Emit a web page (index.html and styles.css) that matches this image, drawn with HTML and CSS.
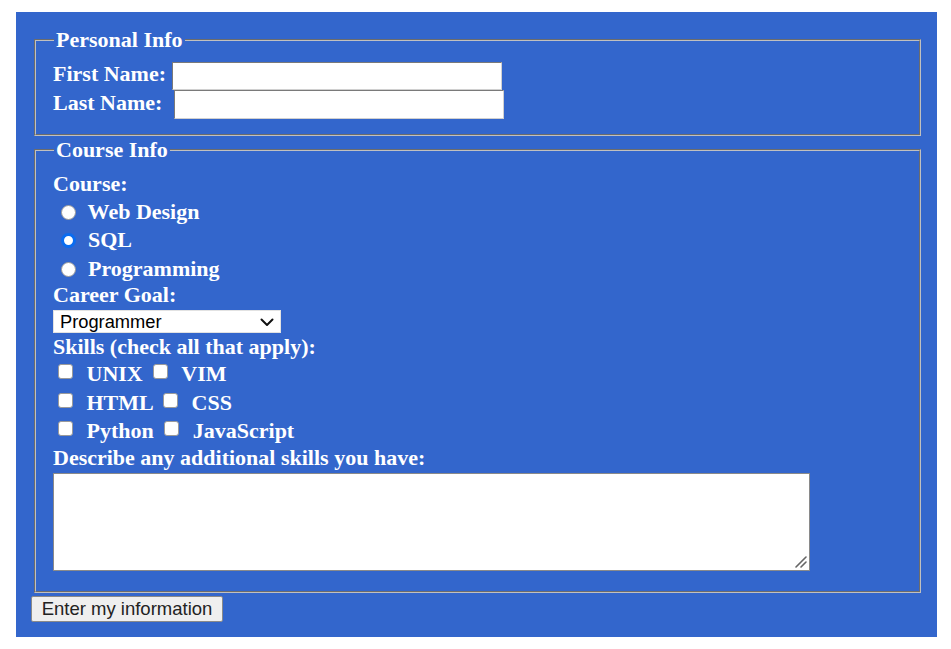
FILE: index.html
```html
<!DOCTYPE html>
<html>
<head>
<meta charset="utf-8">
<title>Course Form</title>
<link rel="stylesheet" href="styles.css">
</head>
<body>
<form class="form">
  <fieldset class="group group-personal">
    <legend class="legend">Personal Info</legend>
    <div class="field-row">
      <label class="label" for="fname">First Name:</label>
      <input class="text-input text-input-first" type="text" id="fname">
    </div>
    <div class="field-row">
      <label class="label" for="lname">Last Name:</label>
      <input class="text-input text-input-last" type="text" id="lname">
    </div>
  </fieldset>
  <fieldset class="group group-course">
    <legend class="legend">Course Info</legend>
    <div class="line line-course">Course:</div>
    <div class="line line-option"><input class="radio" type="radio" name="course"> Web Design</div>
    <div class="line line-option"><input class="radio" type="radio" name="course" checked> SQL</div>
    <div class="line line-option"><input class="radio" type="radio" name="course"> Programming</div>
    <div class="line line-career">Career Goal:</div>
    <div class="select-wrap">
      <select class="select">
        <option>Programmer</option>
        <option>Designer</option>
        <option>Database Admin</option>
      </select>
      <svg class="select-arrow" width="14" height="9" viewBox="0 0 14 9" aria-hidden="true">
        <path d="M1.5 1.5 L7 7 L12.5 1.5" fill="none" stroke="#111" stroke-width="2" stroke-linecap="round" stroke-linejoin="round"/>
      </svg>
    </div>
    <div class="line line-skills">Skills (check all that apply):</div>
    <div class="line line-option"><input class="check" type="checkbox"> UNIX <input class="check" type="checkbox"> VIM</div>
    <div class="line line-option"><input class="check" type="checkbox"> HTML <input class="check" type="checkbox"> CSS</div>
    <div class="line line-option"><input class="check" type="checkbox"> Python <input class="check" type="checkbox"> JavaScript</div>
    <div class="line line-describe">Describe any additional skills you have:</div>
    <div class="textarea-wrap">
      <textarea class="textarea"></textarea>
      <svg class="grip" width="12" height="12" viewBox="0 0 12 12" aria-hidden="true">
        <path d="M1 11 L11 1 M6 11 L11 6" fill="none" stroke="#666" stroke-width="1.6" stroke-linecap="round"/>
      </svg>
    </div>
  </fieldset>
  <button class="submit" type="button">Enter my information</button>
</form>
</body>
</html>
```
FILE: styles.css
```css
html, body {
  margin: 0;
  padding: 0;
  background: #ffffff;
}

.form {
  box-sizing: border-box;
  width: 921px;
  margin: 12px 0 0 16px;
  padding: 15px 0 15px 0;
  background: #3366cc;
  color: #ffffff;
  font-family: "Liberation Serif", "Times New Roman", serif;
  font-weight: bold;
  font-size: 22px;
}

.group {
  margin: 0 16px 0 18px;
  border: 2px groove #c0c0c0;
  padding: 8px 17px 15px 17px;
  min-width: 0;
}

.group-course {
  margin-top: 1px;
  padding-top: 7px;
  padding-bottom: 20px;
}

.legend {
  line-height: 26px;
  padding: 0 2px;
  margin-left: 1px;
}

.field-row {
  display: flex;
  align-items: center;
  height: 29px;
}

.label {
  line-height: 26px;
  margin-top: -3px;
}

.text-input {
  box-sizing: border-box;
  width: 330px;
  height: 29px;
  margin: 0;
  padding: 2px 4px;
  border: 1px solid;
  border-color: #7a7a7a #d0d0d0 #d0d0d0 #7a7a7a;
  background: #ffffff;
  font-family: "Liberation Sans", Arial, sans-serif;
  font-size: 18px;
}

.text-input-first {
  margin-left: 6px;
  height: 28px;
}

.text-input-last {
  margin-left: 12px;
}

.line {
  white-space: nowrap;
}

.line-course {
  line-height: 27.5px;
}

.line-option {
  line-height: 28.5px;
}

.line-career {
  line-height: 24px;
}

.line-skills {
  line-height: 26px;
  margin-top: 1px;
}

.line-describe {
  line-height: 24px;
}

.radio {
  -webkit-appearance: none;
  appearance: none;
  box-sizing: border-box;
  width: 15px;
  height: 15px;
  margin: 0 7px -1px 7.5px;
  border: 1px solid #9a9a9a;
  border-radius: 50%;
  background: #ffffff;
  vertical-align: baseline;
}

.radio:checked {
  border: 3px solid #0a6cf0;
  background: #ffffff;
}

.check {
  -webkit-appearance: none;
  appearance: none;
  box-sizing: border-box;
  width: 15px;
  height: 15px;
  margin: 0 8px 2px 5px;
  border: 1px solid #9a9a9a;
  border-radius: 3px;
  background: #ffffff;
  vertical-align: baseline;
}

.select-wrap {
  position: relative;
  width: 228px;
  margin: 3px 0 0 0;
}

.select {
  -webkit-appearance: none;
  appearance: none;
  display: block;
  box-sizing: border-box;
  width: 228px;
  height: 23px;
  margin: 0;
  padding: 0 0 0 6px;
  border: 1px solid #e2e2e2;
  border-radius: 0;
  background: #ffffff;
  color: #000000;
  font-family: "Liberation Sans", Arial, sans-serif;
  font-size: 18.3px;
  line-height: 21px;
}

.select-arrow {
  position: absolute;
  left: 207px;
  top: 8px;
  pointer-events: none;
}

.textarea-wrap {
  position: relative;
  width: 757px;
  margin: 3.5px 0 0 0;
}

.textarea {
  display: block;
  box-sizing: border-box;
  width: 757px;
  height: 98px;
  margin: 0;
  border: 1px solid #8a8a8a;
  background: #ffffff;
  font-family: "Liberation Mono", monospace;
  font-size: 18px;
  resize: none;
}

.grip {
  position: absolute;
  right: 3px;
  bottom: 3px;
  pointer-events: none;
}

.submit {
  display: block;
  box-sizing: border-box;
  width: 192px;
  height: 26px;
  margin: 3px 0 0 15px;
  padding: 0;
  border: 1px solid #8a8a8a;
  border-radius: 2px;
  background: #efefef;
  color: #222222;
  font-family: "Liberation Sans", Arial, sans-serif;
  font-size: 18.5px;
  line-height: 24px;
}
```
